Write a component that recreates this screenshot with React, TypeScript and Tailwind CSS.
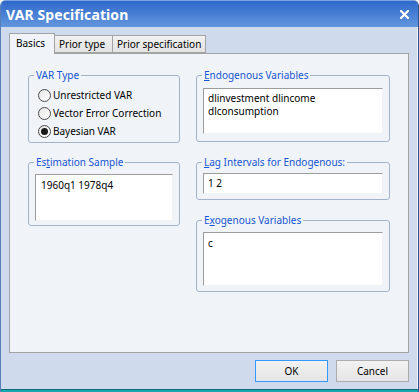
import React from "react";

function Radio({ checked, label }: { checked?: boolean; label: string }) {
  return (
    <div className="flex items-center h-[18px]">
      <div className="w-[13px] h-[13px] rounded-full border border-[#4a4a4a] bg-gradient-to-br from-[#e6e6e6] to-white flex items-center justify-center">
        {checked && <div className="w-[7px] h-[7px] rounded-full bg-[#1a1a1a]" />}
      </div>
      <span className="ml-[2px] text-black">{label}</span>
    </div>
  );
}

function Group({
  legend,
  className,
  children,
}: {
  legend: React.ReactNode;
  className?: string;
  children: React.ReactNode;
}) {
  return (
    <fieldset className={"border border-[#a5b3c8] rounded-[3px] " + (className ?? "")}>
      <legend className="ml-[5px] px-[2px] text-[#1655d0] leading-[14px]">{legend}</legend>
      {children}
    </fieldset>
  );
}

function Field({ className, children }: { className?: string; children?: React.ReactNode }) {
  return (
    <div
      className={
        "bg-white border-t border-l border-[#9c9c9c] border-r border-r-[#f3f3f3] border-b border-b-[#f3f3f3] px-[4px] text-black leading-[13px] " +
        (className ?? "")
      }
    >
      {children}
    </div>
  );
}

export default function App() {
  return (
    <div className="w-[419px] h-[392px] flex flex-col bg-[#cfdbec] border-l border-l-[#5a7fb8] border-r border-r-[#2e5590] font-['Noto_Sans',sans-serif] text-[10px] overflow-hidden rounded-tr-[6px] rounded-tl-[6px]">
      {/* Title bar */}
      <div className="h-[27px] shrink-0 flex items-center justify-between pl-[5px] pr-[9px] bg-gradient-to-b from-[#2f68cb] to-[#6296dc] border-t border-t-[#7aa3e0]">
        <span className="text-white font-bold text-[14px] tracking-[0.1px]">VAR Specification</span>
        <svg width="9" height="9" viewBox="0 0 9 9" className="mt-[1px]">
          <path d="M1 1 L8 8 M8 1 L1 8" stroke="white" strokeWidth="2.2" strokeLinecap="square" />
        </svg>
      </div>

      {/* Body */}
      <div className="flex-1 flex flex-col px-[8px] pt-[6px] border-r border-r-[#eef3fb]">
        {/* Tabs */}
        <div className="flex items-end h-[20px] relative z-10">
          <div className="h-[21px] w-[46px] mb-[-1px] bg-[#f0f4f9] border border-[#a3a3a3] border-b-0 pl-[6px] pt-[2px] text-black">
            Basics
          </div>
          <div className="h-[18px] w-[58px] bg-gradient-to-b from-[#f1f1f1] to-[#e3e3e3] border border-[#a3a3a3] border-l-0 pl-[4px] pt-[1px] text-black">
            Prior type
          </div>
          <div className="h-[18px] w-[93px] bg-gradient-to-b from-[#f1f1f1] to-[#e3e3e3] border border-[#a3a3a3] border-l-0 pl-[4px] pt-[1px] text-black">
            Prior specification
          </div>
        </div>

        {/* Panel */}
        <div className="h-[300px] w-[400px] bg-[#f0f4f9] border border-[#a3a3a3] flex gap-[16px] pl-[18px] pt-[14px]">
          {/* Left column */}
          <div className="w-[152px] flex flex-col">
            <Group legend="VAR Type" className="h-[75px]">
              <div className="pl-[9px] pt-[4px]">
                <Radio label="Unrestricted VAR" />
                <Radio label="Vector Error Correction" />
                <Radio checked label="Bayesian VAR" />
              </div>
            </Group>
            <Group
              legend={
                <>
                  Es<span className="underline">t</span>imation Sample
                </>
              }
              className="h-[71px] mt-[12px]"
            >
              <div className="px-[6px] pt-[5px]">
                <Field className="h-[47px] pt-[4px] pl-[5px]">1960q1 1978q4</Field>
              </div>
            </Group>
          </div>

          {/* Right column */}
          <div className="w-[194px] flex flex-col">
            <Group
              legend={
                <>
                  <span className="underline">E</span>ndogenous Variables
                </>
              }
              className="h-[74px]"
            >
              <div className="px-[6px] pt-[6px]">
                <Field className="h-[46px] pt-[3px]">
                  dlinvestment dlincome
                  <br />
                  dlconsumption
                </Field>
              </div>
            </Group>
            <Group
              legend={
                <>
                  <span className="underline">L</span>ag Intervals for Endogenous:
                </>
              }
              className="h-[45px] mt-[13px]"
            >
              <div className="px-[6px] pt-[4px]">
                <Field className="h-[21px] pt-[3px]">1 2</Field>
              </div>
            </Group>
            <Group
              legend={
                <>
                  E<span className="underline">x</span>ogenous Variables
                </>
              }
              className="h-[79px] mt-[13px]"
            >
              <div className="px-[6px] pt-[5px]">
                <Field className="h-[54px] pt-[4px]">c</Field>
              </div>
            </Group>
          </div>
        </div>

        {/* Buttons */}
        <div className="flex justify-end gap-[8px] mt-[7px] pr-[0px]">
          <button className="w-[73px] h-[22px] border border-[#3399ff] bg-gradient-to-b from-[#f2f2f2] to-[#e5e5e5] text-black text-[10px]">
            OK
          </button>
          <button className="w-[73px] h-[22px] border border-[#acacac] bg-gradient-to-b from-[#f2f2f2] to-[#e5e5e5] text-black text-[10px]">
            Cancel
          </button>
        </div>
      </div>
      <div className="h-[3px] shrink-0 bg-[#19a6b3] border-t border-t-[#0f6f78]" />
    </div>
  );
}
